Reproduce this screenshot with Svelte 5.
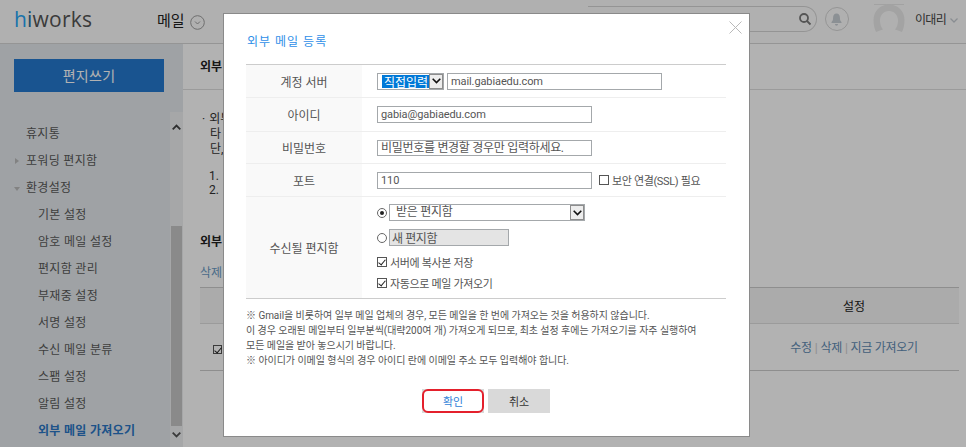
<script>
  const menu = [
    { label: '휴지통', level: 1 },
    { label: '포워딩 편지함', level: 1, arrow: 'right' },
    { label: '환경설정', level: 1, arrow: 'down' },
    { label: '기본 설정', level: 2 },
    { label: '암호 메일 설정', level: 2 },
    { label: '편지함 관리', level: 2 },
    { label: '부재중 설정', level: 2 },
    { label: '서명 설정', level: 2 },
    { label: '수신 메일 분류', level: 2 },
    { label: '스팸 설정', level: 2 },
    { label: '알림 설정', level: 2 },
    { label: '외부 메일 가져오기', level: 2, active: true }
  ]

  const notes = [
    '※ Gmail을 비롯하여 일부 메일 업체의 경우, 모든 메일을 한 번에 가져오는 것을 허용하지 않습니다.',
    '이 경우 오래된 메일부터 일부분씩(대략200여 개) 가져오게 되므로, 최초 설정 후에는 가져오기를 자주 실행하여',
    '모든 메일을 받아 놓으시기 바랍니다.',
    '※ 아이디가 이메일 형식의 경우 아이디 란에 이메일 주소 모두 입력해야 합니다.'
  ]
</script>

<div class="page">
  <header class="topbar">
    <div class="logo"><span class="logo-h">h</span><span class="logo-i">i</span>works</div>
    <div class="app-name">메일</div>
    <svg class="app-caret" width="15" height="15" viewBox="0 0 15 15" fill="none" stroke="#9d9d9d">
      <circle cx="7.5" cy="7.5" r="6.8" />
      <path d="M5 6.5l2.5 2.5L10 6.5" />
    </svg>
    <div class="spacer"></div>
    <div class="search">
      <svg width="14" height="14" viewBox="0 0 14 14" fill="none" stroke="#7a7a7a" stroke-width="1.8">
        <circle cx="6" cy="6" r="4" />
        <path d="M9 9l3.5 3.5" />
      </svg>
    </div>
    <div class="bell">
      <svg width="11" height="13" viewBox="0 0 11 13" fill="#c8ced4">
        <path d="M5.5 0.5c2.4 0 3.4 1.9 3.4 4 0 2.6 0.7 3.6 1.6 4.6v1H0.5v-1c0.9-1 1.6-2 1.6-4.6 0-2.1 1-4 3.4-4z" />
        <path d="M4 11h3c0 1-0.6 1.7-1.5 1.7S4 12 4 11z" />
      </svg>
    </div>
    <svg class="avatar" width="32" height="29" viewBox="0 0 32 29">
      <path d="M1 0.5h30" stroke="#e9e9e9" fill="none" />
      <path d="M3 28C1 24 0.5 20 0.5 16 0.5 7 7 0.5 16 0.5S31.500 7 31.500 16c0 4-0.5 8-2.500 12l-7-2.500c2-2.500 3-5.500 3-9 0-5.500-4-9.500-9-9.500s-9 4-9 9.500c0 3.500 1 6.500 3 9z" fill="#eaeaea" />
    </svg>
    <div class="user">이대리</div>
    <svg class="user-caret" width="8" height="5" viewBox="0 0 8 5" fill="none" stroke="#c5cbd1" stroke-width="1.300">
      <path d="M0.500 0.500L4 4l3.500-3.500" />
    </svg>
  </header>

  <div class="columns">
    <aside class="sidebar">
      <button class="compose">편지쓰기</button>
      <div class="menu-wrap">
        <ul class="menu">
          {#each menu as item}
            <li class:sub={item.level === 2} class:active={item.active}>
              {#if item.arrow === 'right'}<i class="arrow-right"></i>{/if}
              {#if item.arrow === 'down'}<i class="arrow-down"></i>{/if}
              {item.label}
            </li>
          {/each}
        </ul>
        <div class="scrollbar">
          <svg width="9" height="6" viewBox="0 0 9 6" fill="none" stroke="#444" stroke-width="1.800"><path d="M0.700 5.300L4.500 1.500l3.800 3.800" /></svg>
          <div class="thumb"></div>
          <svg width="9" height="6" viewBox="0 0 9 6" fill="none" stroke="#555" stroke-width="1.800"><path d="M0.700 0.700l3.800 3.800 3.800-3.800" /></svg>
        </div>
      </div>
    </aside>

    <main class="content">
      <h2 class="content-title">외부</h2>
      <div class="content-body">
        <p class="intro"><span class="dot">·</span>외부<br /><span class="indent">타</span><br /><span class="indent">단,</span></p>
        <p class="steps">1.<br />2.</p>
        <h3>외부</h3>
        <a class="del" href="#top">삭제</a>
        <div class="table-head"><span>설정</span></div>
        <div class="table-row">
          <span class="check check-row"></span>
          <span class="row-links"><a href="#top">수정</a><b>|</b><a href="#top">삭제</a><b>|</b><a href="#top">지금 가져오기</a></span>
        </div>
      </div>
    </main>
  </div>

  <div class="overlay">
    <div class="modal">
      <svg class="close" width="13" height="13" viewBox="0 0 13 13" stroke="#b9b9b9" fill="none">
        <path d="M0.500 0.500l12 12M12.500 0.500l-12 12" />
      </svg>
      <h1>외부 메일 등록</h1>
      <div class="form">
        <div class="row h33">
          <div class="label">계정 서버</div>
          <div class="field">
            <div class="select first">
              <span class="selected">직접입력</span>
              <span class="select-btn"><svg width="9" height="6" viewBox="0 0 9 6" fill="none" stroke="#111" stroke-width="1.600"><path d="M0.700 0.700l3.800 3.800 3.800-3.800" /></svg></span>
            </div>
            <input class="server latin" value="mail.gabiaedu.com" />
          </div>
        </div>
        <div class="row h34">
          <div class="label">아이디</div>
          <div class="field"><input class="wide latin" value="gabia@gabiaedu.com" /></div>
        </div>
        <div class="row h32">
          <div class="label">비밀번호</div>
          <div class="field"><input class="wide pw" placeholder="비밀번호를 변경할 경우만 입력하세요." /></div>
        </div>
        <div class="row h33">
          <div class="label">포트</div>
          <div class="field">
            <input class="wide latin" value="110" />
            <span class="check ssl"></span><span class="opt">보안 연결(SSL) 필요</span>
          </div>
        </div>
        <div class="row last">
          <div class="label">수신될 편지함</div>
          <div class="field stack">
            <div class="line l1">
              <span class="radio on"></span>
              <div class="select box">
                <span class="box-text">받은 편지함</span>
                <span class="select-btn"><svg width="9" height="6" viewBox="0 0 9 6" fill="none" stroke="#111" stroke-width="1.600"><path d="M0.700 0.700l3.800 3.800 3.800-3.800" /></svg></span>
              </div>
            </div>
            <div class="line l2">
              <span class="radio"></span>
              <input class="new-box" disabled value="새 편지함" />
            </div>
            <div class="line l3"><span class="check on"></span><span class="opt">서버에 복사본 저장</span></div>
            <div class="line l4"><span class="check on"></span><span class="opt">자동으로 메일 가져오기</span></div>
          </div>
        </div>
      </div>
      <div class="notes">
        {#each notes as note}
          <p>{note}</p>
        {/each}
      </div>
      <div class="actions">
        <span class="ok-wrap"><button class="ok">확인</button></span>
        <button class="cancel">취소</button>
      </div>
    </div>
  </div>
</div>

<style>
  :global(body) {
    margin: 0;
    overflow: hidden;
  }

  .page {
    position: relative;
    width: 966px;
    height: 447px;
    overflow: hidden;
    background: #fff;
    font-family: Roboto, 'Noto Sans CJK KR', sans-serif;
    font-size: 12px;
    color: #333;
  }

  .topbar {
    height: 43px;
    border-bottom: 1px solid #d6d6d6;
    background: #fdfdfd;
    display: flex;
    align-items: center;
    box-sizing: content-box;
  }

  .logo {
    margin-left: 14px;
    margin-top: -6px;
    width: 143px;
    font-family: 'Open Sans', sans-serif;
    font-size: 21px;
    line-height: 24px;
    color: #555;
    letter-spacing: 0.2px;
  }

  .logo-h {
    color: #25a5f5;
  }

  .logo-i {
    color: #2a6f99;
  }

  .app-name {
    font-size: 15px;
    margin-top: -4px;
    color: #222;
    width: 33px;
  }

  .app-caret {
    margin-top: 1px;
  }

  .spacer {
    flex: 1;
  }

  .search {
    width: 224px;
    height: 24px;
    border: 1px solid #d5d5d5;
    border-left: none;
    border-radius: 0 13px 13px 0;
    display: flex;
    align-items: center;
    justify-content: flex-end;
    padding-right: 4px;
    margin-top: -5px;
    margin-right: 8px;
  }

  .bell {
    width: 22px;
    height: 22px;
    border: 1px solid #d5d5d5;
    border-radius: 50%;
    display: flex;
    align-items: center;
    justify-content: center;
    margin-top: -5px;
    margin-right: 24px;
  }

  .avatar {
    margin-top: -7px;
    margin-right: 10px;
  }

  .user {
    font-size: 12px;
    letter-spacing: -0.7px;
    margin-top: -6px;
    margin-right: 4px;
    color: #444;
  }

  .user-caret {
    margin-top: -3px;
    margin-right: 8px;
  }

  .columns {
    display: flex;
    height: 403px;
  }

  .sidebar {
    width: 183px;
    flex: none;
    background: #e4e9ed;
    display: flex;
    flex-direction: column;
  }

  .compose {
    width: 150px;
    height: 33px;
    margin: 15px 0 0 14px;
    border: none;
    background: #2579cf;
    color: #fff;
    font: inherit;
    font-size: 14px;
    letter-spacing: 0.3px;
    padding: 0 0 2px;
  }

  .menu-wrap {
    flex: 1;
    display: flex;
    margin-top: 20px;
    min-height: 0;
  }

  .menu {
    flex: 1;
    margin: 0;
    padding: 9px 0 0;
    list-style: none;
  }

  .menu li {
    position: relative;
    height: 27px;
    line-height: 27px;
    padding-left: 26px;
    letter-spacing: 0.3px;
    white-space: nowrap;
    color: #595959;
  }

  .menu li.sub {
    padding-left: 38px;
  }

  .menu li.active {
    color: #2a76c4;
    font-weight: 700;
  }

  .arrow-right,
  .arrow-down {
    position: absolute;
    width: 0;
    height: 0;
    border-style: solid;
  }

  .arrow-right {
    left: 15px;
    top: 10px;
    border-width: 3px 0 3px 4px;
    border-color: transparent transparent transparent #bbb;
  }

  .arrow-down {
    left: 14px;
    top: 12px;
    border-width: 4px 3px 0;
    border-color: #bbb transparent transparent;
  }

  .scrollbar {
    width: 13px;
    background: #eef0f1;
    display: flex;
    flex-direction: column;
    align-items: center;
    padding: 12px 0 0;
    box-sizing: border-box;
  }

  .scrollbar .thumb {
    width: 11px;
    height: 200px;
    margin: 96px 0 6px;
    background: #c6c6c6;
  }

  .content {
    flex: 1;
    min-width: 0;
    padding-left: 17px;
  }

  .content-title {
    margin: 0 0 0 -17px;
    padding-left: 17px;
    height: 45px;
    line-height: 47px;
    font-size: 12px;
    font-weight: 700;
    color: #222;
    border-bottom: 1px solid #dedede;
  }

  .content-body {
    margin-right: 7px;
  }

  .intro {
    margin: 22px 0 0;
    line-height: 15px;
    white-space: nowrap;
  }

  .dot {
    margin: 0 4px 0 2px;
  }

  .indent {
    margin-left: 10px;
  }

  .steps {
    margin: 12px 0 0 9px;
    line-height: 14px;
  }

  h3 {
    margin: 36px 0 0;
    font-size: 12px;
    line-height: 18px;
    font-weight: 700;
    color: #222;
  }

  .del {
    display: block;
    margin-top: 14px;
    line-height: 16px;
    color: #6b9ac4;
    text-decoration: none;
  }

  .table-head {
    margin-top: 6px;
    height: 35px;
    border-top: 1px solid #ccc;
    border-bottom: 1px solid #dedede;
    background: #f5f5f5;
    display: flex;
    align-items: center;
    justify-content: flex-end;
    color: #222;
  }

  .table-head span {
    width: 210px;
    text-align: center;
  }

  .table-row {
    height: 46px;
    border-bottom: 1px solid #ccc;
    display: flex;
    align-items: center;
    justify-content: space-between;
  }

  .row-links {
    width: 210px;
    text-align: center;
    letter-spacing: -0.3px;
    margin-top: -1px;
  }

  .row-links a {
    color: #5f8bb3;
    text-decoration: none;
  }

  .row-links b {
    font-weight: 400;
    color: #ccc;
    margin: 0 3px;
  }

  .overlay {
    position: absolute;
    inset: 0;
    background: rgba(0, 0, 0, 0.3);
    padding: 13px 0 0 223px;
  }

  .modal {
    position: relative;
    box-sizing: border-box;
    width: 527px;
    height: 424px;
    background: #fff;
    border: 1px solid #8a8a8a;
    padding: 0 23px 0 22px;
  }

  .close {
    position: absolute;
    top: 7px;
    right: 7px;
  }

  h1 {
    margin: 0;
    padding: 21px 0 0 1px;
    height: 29px;
    font-size: 12px;
    line-height: 15px;
    font-weight: 400;
    letter-spacing: 1px;
    color: #2f8fe8;
    box-sizing: content-box;
  }

  .form {
    border-top: 1px solid #ccc;
    border-bottom: 1px solid #ccc;
  }

  .row {
    display: flex;
    border-bottom: 1px solid #eee;
    box-sizing: border-box;
  }

  .row.h33 {
    height: 33px;
  }

  .row.h34 {
    height: 34px;
  }

  .row.h32 {
    height: 32px;
  }

  .row.last {
    height: 101px;
    border-bottom: none;
  }

  .label {
    width: 116px;
    flex: none;
    background: #f9f9f9;
    display: flex;
    align-items: center;
    justify-content: center;
    color: #555;
  }

  .field {
    flex: 1;
    padding-left: 15px;
    display: flex;
    align-items: center;
  }

  .field.stack {
    display: block;
    padding-top: 7px;
  }

  input {
    box-sizing: border-box;
    height: 17px;
    border: 1px solid #a4a8ab;
    padding: 0 3px;
    font: inherit;
    font-size: 12px;
    color: #555;
    background: #fff;
    outline: none;
    border-radius: 0;
  }

  input.latin {
    font-size: 11px;
    letter-spacing: -0.1px;
  }

  input::placeholder {
    color: #555;
    opacity: 1;
  }

  .wide {
    width: 215px;
  }

  .pw {
    height: 16px;
    letter-spacing: -0.3px;
  }

  .server {
    width: 215px;
    margin-left: 3px;
  }

  .select {
    box-sizing: border-box;
    height: 17px;
    border: 1px solid #a4a8ab;
    display: flex;
    align-items: stretch;
    background: #fff;
  }

  .select.first {
    width: 67px;
    padding-left: 4px;
  }

  .selected {
    flex: 1;
    display: flex;
    align-items: center;
    background: #0078d7;
    color: #fff;
    font-size: 12px;
    margin: 1px 0;
    padding-left: 2px;
    white-space: nowrap;
  }

  .select-btn {
    width: 14px;
    flex: none;
    background: #ededed;
    border: 1px solid #8d8d8d;
    box-sizing: border-box;
    display: flex;
    align-items: center;
    justify-content: center;
    margin-left: auto;
  }

  .select.box {
    width: 196px;
  }

  .box-text {
    flex: 1;
    padding-left: 6px;
    line-height: 15px;
    color: #555;
    letter-spacing: -0.3px;
  }

  .line {
    display: flex;
    align-items: center;
  }

  .l1 {
    height: 17px;
  }

  .l2 {
    height: 17px;
    margin-top: 8px;
  }

  .l3 {
    height: 16px;
    margin-top: 8px;
  }

  .l4 {
    height: 16px;
    margin-top: 5px;
  }

  .radio {
    box-sizing: border-box;
    width: 10px;
    height: 10px;
    border: 1px solid #666;
    border-radius: 50%;
    margin-right: 2px;
    position: relative;
    flex: none;
    background: #fff;
  }

  .radio.on::after {
    content: '';
    position: absolute;
    left: 2px;
    top: 2px;
    width: 4px;
    height: 4px;
    border-radius: 50%;
    background: #222;
  }

  .new-box {
    width: 120px;
    padding-left: 2px;
    background: #e4e4e4;
    color: #555;
    letter-spacing: -0.4px;
  }

  .check {
    box-sizing: border-box;
    display: inline-block;
    width: 10px;
    height: 10px;
    border: 1px solid #555;
    position: relative;
    flex: none;
    background: #fff;
  }

  .check.on::after,
  .check-row::after {
    content: '';
    position: absolute;
    left: 2px;
    top: 0;
    width: 3px;
    height: 6px;
    border: solid #222;
    border-width: 0 1.5px 1.5px 0;
    transform: rotate(40deg);
  }

  .check-row {
    margin: 4px 0 0 13px;
    background: transparent;
    width: 9px;
    height: 9px;
  }

  .ssl {
    margin-left: 7px;
  }

  .opt {
    margin-left: 3px;
    font-size: 11px;
    letter-spacing: -0.35px;
    color: #555;
  }

  .notes {
    margin-top: 9px;
    font-size: 10px;
    line-height: 15px;
    color: #555;
  }

  .notes p {
    margin: 0;
    white-space: nowrap;
    letter-spacing: -0.05px;
  }

  .actions {
    margin-top: 21px;
    display: flex;
    justify-content: center;
    gap: 4px;
  }

  .ok-wrap {
    display: block;
    background: #d9d9d9;
    height: 24px;
  }

  .actions button {
    box-sizing: border-box;
    width: 62px;
    height: 24px;
    padding: 0;
    font: inherit;
    font-size: 11px;
    cursor: pointer;
    display: block;
  }

  .ok {
    background: #fff;
    border: 2px solid #e4202c;
    border-radius: 6px;
    color: #2f7fd8;
  }

  .cancel {
    border: none;
    background: #d9d9d9;
    color: #333;
  }
</style>
